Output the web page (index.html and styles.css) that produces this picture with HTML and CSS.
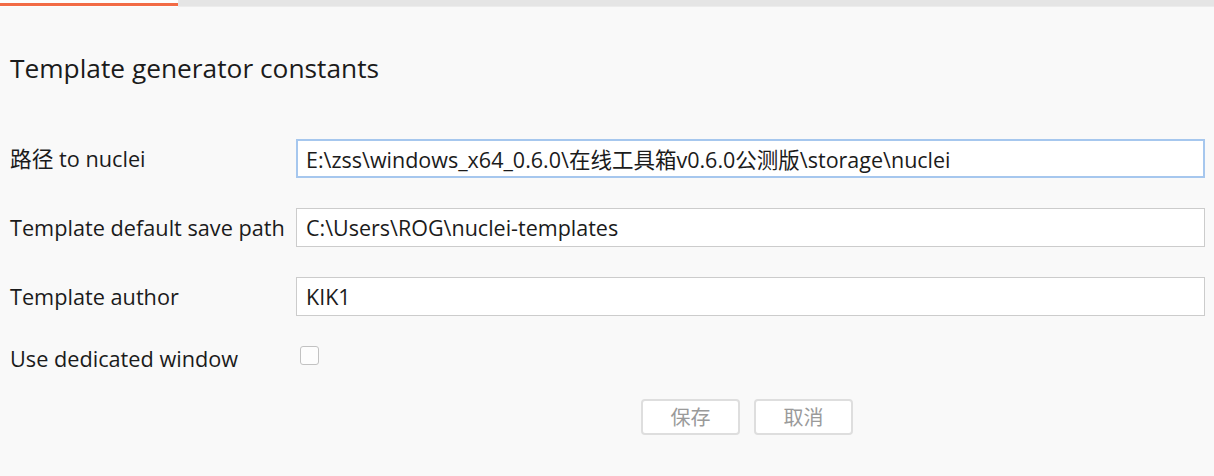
FILE: index.html
```html
<!DOCTYPE html>
<html lang="zh">
<head>
<meta charset="utf-8">
<title>Template generator constants</title>
<link rel="stylesheet" href="styles.css">
</head>
<body>
<div class="tabbar">
  <div class="tab-active"></div>
</div>
<main class="panel">
  <h1 class="title">Template generator constants</h1>
  <form class="form">
    <label class="label" for="f-path">路径 to nuclei</label>
    <input class="field field-focus" id="f-path" type="text" value="E:\zss\windows_x64_0.6.0\在线工具箱v0.6.0公测版\storage\nuclei">
    <label class="label" for="f-save">Template default save path</label>
    <input class="field" id="f-save" type="text" value="C:\Users\ROG\nuclei-templates">
    <label class="label" for="f-author">Template author</label>
    <input class="field" id="f-author" type="text" value="KIK1">
    <label class="label label-check" for="f-win">Use dedicated window</label>
    <div class="check-cell"><span class="checkbox" id="f-win"></span></div>
  </form>
  <div class="actions">
    <button class="btn" type="button">保存</button>
    <button class="btn" type="button">取消</button>
  </div>
</main>
</body>
</html>
```
FILE: styles.css
```css
* { box-sizing: border-box; }
html, body {
  margin: 0;
  padding: 0;
  background: #f9f9f9;
}
body {
  font-family: "Open Sans", "Noto Sans CJK SC", sans-serif;
  color: #1b1b1b;
  width: 1214px;
  height: 476px;
  overflow: hidden;
}
.tabbar {
  height: 7px;
  background: #e5e5e5;
  border-bottom: 1px solid #ececec;
  display: flex;
}
.tab-active {
  width: 178px;
  height: 7px;
  background: #fdfdfd;
  border-bottom: 1px solid #fdfdfd;
  padding-top: 3px;
}
.tab-active::after {
  content: "";
  display: block;
  height: 3px;
  background: #f26b45;
}
.panel {
  padding: 0 9px 0 10px;
}
.title {
  margin: 41px 0 0 0;
  font-size: 26.3px;
  font-weight: 400;
  line-height: 40px;
  height: 40px;
  white-space: nowrap;
}
.form {
  margin-top: 51px;
  display: grid;
  grid-template-columns: 286px 1fr;
  grid-template-rows: 39px 39px 39px 19px;
  row-gap: 30px;
  align-items: center;
}
.label {
  font-size: 21.7px;
  line-height: 28px;
  white-space: nowrap;
}
.field {
  height: 39px;
  width: 100%;
  margin: 0;
  border: 1px solid #cccccc;
  background: #ffffff;
  padding: 0 9px;
  font-family: "Open Sans", "Noto Sans CJK SC", sans-serif;
  font-size: 21.5px;
  color: #1b1b1b;
  outline: none;
}
.field-focus {
  border: 2px solid #a6c7ee;
  padding: 0 8px;
}
.label-check {
  position: relative;
  top: 3px;
}
.check-cell {
  height: 19px;
  display: flex;
  align-items: center;
  padding-left: 4px;
}
.checkbox {
  width: 19px;
  height: 19px;
  border: 1px solid #c2c2c2;
  border-radius: 3px;
  background: #fdfdfd;
}
.actions {
  margin-top: 34px;
  display: flex;
  gap: 14px;
  padding-left: 631px;
}
.btn {
  width: 99px;
  height: 36px;
  border: 2px solid #dedede;
  border-radius: 4px;
  background: #ffffff;
  color: #9a9a9a;
  font-family: "Noto Sans CJK SC", sans-serif;
  font-size: 20px;
  line-height: 32px;
  padding: 0;
}
```
